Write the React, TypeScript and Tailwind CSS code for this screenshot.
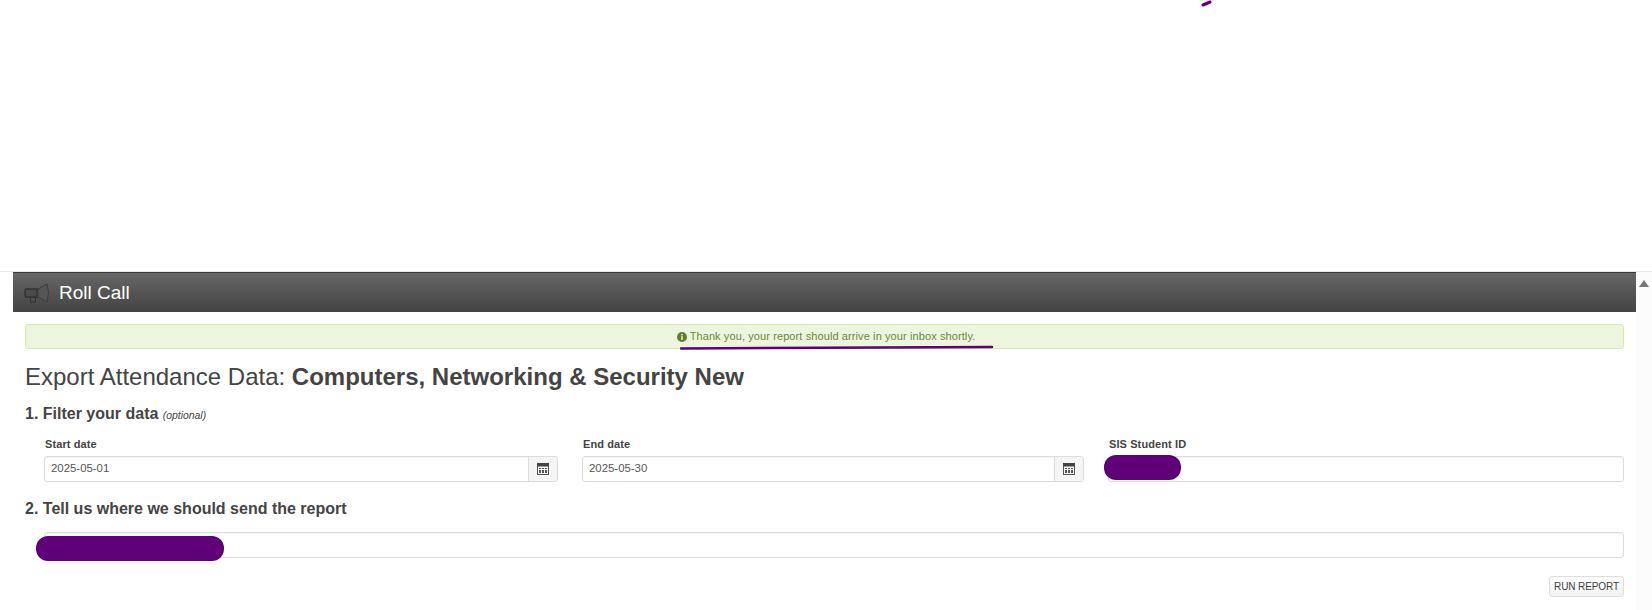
function DateField({ label, value, className }: { label: string; value: string; className: string }) {
  return (
    <div className={className}>
      <label className="block h-[25px] pl-[1px] text-[11px] font-bold leading-[26px] tracking-[0.1px] text-[#444]">{label}</label>
      <div className="flex h-[26px] rounded-[3px] border border-[#ddd] bg-white shadow-[inset_0_1px_1px_rgba(0,0,0,0.05)]">
        <div className="flex-1 pl-[6px] text-[11.4px] leading-[23px] text-[#555]">{value}</div>
        <div className="flex w-[29px] items-center justify-center rounded-r-[3px] border-l border-[#ddd] bg-[#f5f5f5]">
          <svg width="12" height="12" viewBox="0 0 12 12" aria-hidden="true">
            <rect x="0.5" y="0.5" width="11" height="11" fill="#f4f4f4" stroke="#555" />
            <rect x="0" y="0" width="12" height="3.5" fill="#444" />
            <g fill="#555">
              <rect x="2" y="5" width="2" height="1" />
              <rect x="5" y="5" width="2" height="1" />
              <rect x="8" y="5" width="2" height="1" />
              <rect x="2" y="7" width="2" height="3" />
              <rect x="5" y="7" width="2" height="3" />
              <rect x="8" y="7" width="2" height="3" />
            </g>
          </svg>
        </div>
      </div>
    </div>
  );
}

export default function App() {
  return (
    <div className="relative h-[610px] w-[1652px] overflow-hidden bg-white font-['Liberation_Sans',Arial,sans-serif]">
      <div className="h-[271px]" />
      <svg className="absolute left-[1200px] top-0" width="14" height="8" viewBox="0 0 14 8" aria-hidden="true">
        <path d="M3 5 L10 2" stroke="#5f0078" strokeWidth="3" strokeLinecap="round" />
      </svg>
      <div className="flex h-[339px] border-t border-[#e8e8e8]">
        <div className="w-[13px] shrink-0" />
        <div className="min-w-0 flex-1">
          <header className="flex h-[40px] items-center gap-[8px] border-t border-[#3a3a3a] bg-gradient-to-b from-[#666666] to-[#444444] pl-[11px]">
            <svg width="27" height="20" viewBox="0 0 27 20" aria-hidden="true">
              <path d="M1.5 6 H13 V14 H1.5 Q0.5 10 1.5 6 Z" fill="#4a4a4a" stroke="#333" strokeWidth="1.5" />
              <rect x="6.5" y="14.5" width="5" height="4.5" fill="#4f4f4f" stroke="#333" strokeWidth="1" />
              <path d="M14 6 L23 1 Q26 10 23 19 L14 14 Z" fill="#555" stroke="#3d3d3d" strokeWidth="1" />
            </svg>
            <span className="text-[19px] leading-none text-white">Roll Call</span>
          </header>
          <main className="px-[12px] pt-[12px]">
            <div className="relative flex h-[25px] items-center justify-center gap-[3px] rounded-[3px] border border-[#d6e9a8] bg-[#eef5df] pl-[3px] text-[11px] tracking-[0.1px] text-[#6b8a3a]">
              <svg width="10" height="10" viewBox="0 0 10 10" aria-hidden="true">
                <circle cx="5" cy="5" r="5" fill="#5f7f2a" />
                <rect x="4.2" y="4.2" width="1.6" height="3.6" fill="#eef5df" />
                <rect x="4.2" y="2" width="1.6" height="1.4" fill="#eef5df" />
              </svg>
              <span>Thank you, your report should arrive in your inbox shortly.</span>
              <svg className="absolute left-[654px] top-[20px]" width="314" height="5" viewBox="0 0 314 5" aria-hidden="true">
                <path d="M1 3.4 L312 2" stroke="#5f0078" strokeWidth="2.5" strokeLinecap="round" />
              </svg>
            </div>
            <h1 className="mt-[14px] text-[24px] leading-[28px] text-[#444]">
              Export Attendance Data: <b>Computers, Networking &amp; Security New</b>
            </h1>
            <h2 className="mt-[13px] text-[16px] font-bold leading-[20px] text-[#444]">
              1. Filter your data <span className="text-[10.4px] font-normal italic">(optional)</span>
            </h2>
            <div className="mt-[5px] flex">
              <DateField label="Start date" value="2025-05-01" className="ml-[19px] w-[514px]" />
              <DateField label="End date" value="2025-05-30" className="ml-[24px] w-[502px]" />
              <div className="relative ml-[24px] flex-1">
                <label className="block h-[25px] pl-[1px] text-[11px] font-bold leading-[26px] tracking-[0.1px] text-[#444]">SIS Student ID</label>
                <div className="h-[26px] rounded-[3px] border border-[#ddd] bg-white shadow-[inset_0_1px_1px_rgba(0,0,0,0.05)]" />
                <div className="absolute left-[-4px] top-[24px] h-[25px] w-[77px] rounded-[12px] bg-[#5f0078]" />
              </div>
            </div>
            <h2 className="mt-[17px] text-[16px] font-bold leading-[20px] text-[#444]">2. Tell us where we should send the report</h2>
            <div className="relative ml-[19px] mt-[13px] h-[26px] rounded-[3px] border border-[#ddd] bg-white shadow-[inset_0_1px_1px_rgba(0,0,0,0.05)]">
              <div className="absolute left-[-9px] top-[3px] h-[25px] w-[188px] rounded-[12px] bg-[#5f0078]" />
            </div>
            <div className="mt-[18px] flex justify-end">
              <button className="h-[21px] w-[75px] rounded-[3px] border border-[#ddd] bg-gradient-to-b from-white to-[#f2f2f2] text-[10px] tracking-[-0.1px] text-[#444]">RUN REPORT</button>
            </div>
          </main>
        </div>
        <div className="flex w-[16px] shrink-0 justify-center bg-[#fcfcfc] pt-[8px]">
          <div className="h-0 w-0 border-x-[5px] border-b-[7px] border-x-transparent border-b-[#777]" />
        </div>
      </div>
    </div>
  );
}
